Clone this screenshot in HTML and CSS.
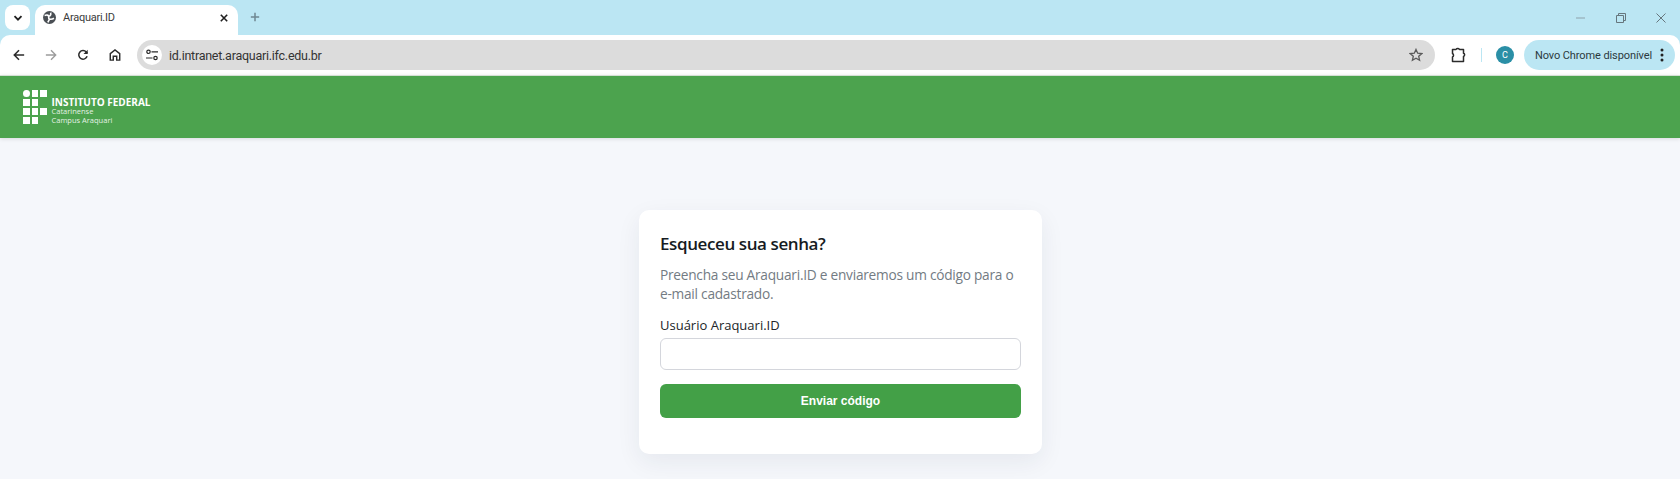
FILE: index.html
```html
<!DOCTYPE html>
<html lang="pt-BR">
<head>
<meta charset="utf-8">
<title>Araquari.ID</title>
<link rel="stylesheet" href="styles.css">
</head>
<body>
<div class="browser">
  <div class="tabstrip">
    <button class="tab-search" aria-label="Pesquisar guias">
      <svg width="12" height="12" viewBox="0 0 12 12"><path d="M2.5 4.2 6 7.7l3.5-3.5" fill="none" stroke="#1f1f1f" stroke-width="1.8"/></svg>
    </button>
    <div class="tab">
      <svg class="tab-globe" width="13" height="13" viewBox="0 0 16 16"><circle cx="8" cy="8" r="8" fill="#4a4f54"/><path d="M2 5.500c2.500-1 4.500-.5 5 1s-1 3 1 3.500 3 .5 5.500-1M6 14c.5-1.500 1-2 2-4M9.500 2c.5 1.500 0 3-1.500 4.500" fill="none" stroke="#fff" stroke-width="2"/></svg>
      <span class="tab-title">Araquari.ID</span>
      <svg class="tab-close" width="8" height="8" viewBox="0 0 10 10"><path d="M1 1l8 8M9 1 1 9" stroke="#1f1f1f" stroke-width="2" fill="none"/></svg>
    </div>
    <svg class="new-tab" width="10" height="10" viewBox="0 0 12 12"><path d="M6 1v10M1 6h10" stroke="#6f8791" stroke-width="1.800" fill="none"/></svg>
    <div class="window-controls">
      <svg width="10" height="10" viewBox="0 0 10 10"><path d="M0 5h9" stroke="#8ea2ab" stroke-width="1"/></svg>
      <svg width="10" height="10" viewBox="0 0 10 10"><path d="M.5 2.500h7v7h-7zM2.500 2.500v-2h7v7h-2" fill="none" stroke="#66767d" stroke-width="1"/></svg>
      <svg width="10" height="10" viewBox="0 0 10 10"><path d="M.5.5l9 9M9.500.5l-9 9" fill="none" stroke="#66767d" stroke-width="1"/></svg>
    </div>
  </div>
  <div class="toolbar">
    <div class="nav-icons">
      <svg width="12" height="12" viewBox="0 0 14 14"><path d="M13 7H2M7 1.500 1.500 7 7 12.500" fill="none" stroke="#2b2b2b" stroke-width="1.800"/></svg>
      <svg width="12" height="12" viewBox="0 0 14 14"><path d="M1 7h11M7 1.500 12.500 7 7 12.500" fill="none" stroke="#9c9c9c" stroke-width="1.600"/></svg>
      <svg width="12" height="12" viewBox="0 0 14 14"><path d="M11.800 8.500A5 5 0 1 1 10.800 3.500L12 5" fill="none" stroke="#2b2b2b" stroke-width="1.800"/><path d="M12.500.8v4.900H7.600z" fill="#2b2b2b"/></svg>
      <svg width="12" height="12" viewBox="0 0 14 14"><path d="M1.500 13V5.500L7 1.200l5.500 4.300V13H9V8.500H5V13Z" fill="none" stroke="#2b2b2b" stroke-width="1.700"/></svg>
    </div>
    <div class="omnibox">
      <span class="site-info">
        <svg width="12" height="12" viewBox="0 0 12 12"><g fill="none" stroke="#2b2b2b" stroke-width="1.200"><circle cx="2.500" cy="2.800" r="1.700"/><path d="M5.500 2.800H12M0 9h6.500"/><circle cx="9.500" cy="9" r="1.700"/></g></svg>
      </span>
      <span class="url">id.intranet.araquari.ifc.edu.br</span>
      <svg class="star" width="14" height="14" viewBox="0 0 14 14"><path d="m7 1.400 1.700 3.800 4.100.4-3.100 2.700.9 4L7 10.200l-3.600 2.100.9-4-3.100-2.700 4.100-.4Z" fill="none" stroke="#5a5a5a" stroke-width="1.300"/></svg>
    </div>
    <svg class="ext" width="16" height="16" viewBox="0 0 16 16"><path d="M2.500 2.500H6a2 2 0 0 1 3.500 0h4v3.700a1.700 1.700 0 0 1 0 3.200v5H2.500V10a2 2 0 0 0 0-3.500Z" fill="none" stroke="#2b2b2b" stroke-width="1.500" stroke-linejoin="round"/></svg>
    <span class="divider"></span>
    <span class="avatar">C</span>
    <div class="update-pill">
      <span>Novo Chrome disponível</span>
      <svg width="4" height="14" viewBox="0 0 4 14"><circle cx="2" cy="2" r="1.500" fill="#222"/><circle cx="2" cy="7" r="1.500" fill="#222"/><circle cx="2" cy="12" r="1.500" fill="#222"/></svg>
    </div>
  </div>
</div>
<header class="site-header">
  <div class="logo">
    <div class="logo-grid">
      <i class="dot"></i><i></i><i></i>
      <i></i><i></i><b></b>
      <i></i><i></i><i></i>
      <i></i><i></i><b></b>
    </div>
    <div class="logo-text">
      <strong>INSTITUTO FEDERAL</strong>
      <span>Catarinense</span>
      <span>Campus Araquari</span>
    </div>
  </div>
</header>
<main class="page">
  <form class="card">
    <h1>Esqueceu sua senha?</h1>
    <p>Preencha seu Araquari.ID e enviaremos um código para o e-mail cadastrado.</p>
    <label for="user">Usuário Araquari.ID</label>
    <input id="user" type="text">
    <button type="button" class="submit">Enviar código</button>
  </form>
</main>
</body>
</html>
```
FILE: styles.css
```css
* { box-sizing: border-box; }
html, body { margin: 0; height: 100%; overflow: hidden; }
body {
  background: #f5f7fb;
  font-family: "Open Sans", "Noto Sans", sans-serif;
  display: flex;
  flex-direction: column;
}
.browser { background: #bbe6f3; flex: none; font-family: "Roboto", "Open Sans", sans-serif; }
.tabstrip {
  height: 35px;
  display: flex;
  align-items: flex-end;
  padding-left: 5px;
}
.tab-search {
  width: 25px; height: 25px;
  margin-bottom: 5px;
  background: #fff;
  border: 0; border-radius: 8px;
  padding: 0;
  display: flex; align-items: center; justify-content: center;
}
.tab {
  width: 203px; height: 30px;
  margin-left: 5px;
  background: #fff;
  border-radius: 10px 10px 0 0;
  display: flex; align-items: center;
  padding: 0 10px 5px 8px;
}
.tab-globe { flex: none; }
.tab-title { font-size: 11px; letter-spacing: -.25px; color: #3a3a3a; margin-left: 7px; flex: 1; }
.new-tab { margin: 0 0 13px 12px; }
.window-controls {
  margin-left: auto;
  display: flex; gap: 30px;
  align-self: flex-start;
  padding: 13px 14px 0 0;
}
.toolbar {
  height: 40px;
  background: #fff;
  border-radius: 10px 10px 0 0;
  display: flex; align-items: center;
  padding: 0 4px 0 0;
}
.nav-icons {
  display: flex; gap: 20px;
  padding-left: 13px;
  width: 137px;
}
.omnibox {
  width: 1298px; height: 30px;
  background: #dcdcdc;
  border-radius: 15px;
  display: flex; align-items: center;
  padding: 0 12px 0 5px;
}
.site-info {
  width: 20px; height: 20px;
  background: #fff; border-radius: 50%;
  display: flex; align-items: center; justify-content: center;
}
.url { font-size: 12.500px; letter-spacing: -.25px; color: #333; margin-left: 7px; flex: 1; }
.star { flex: none; }
.ext { margin-left: 15px; flex: none; }
.divider { width: 1px; height: 14px; background: #bbe6f3; margin-left: 15px; }
.avatar {
  width: 18px; height: 18px; border-radius: 50%;
  background: #2a8fa6; color: #fff;
  font-size: 9px; line-height: 18px; text-align: center;
  margin-left: 14px;
}
.update-pill {
  width: 151px; height: 30px;
  background: #bbe6f3;
  border-radius: 15px;
  margin-left: 10px;
  display: flex; align-items: center; justify-content: space-between;
  padding: 0 11px 0 11px;
  font-size: 11px; letter-spacing: -.1px; color: #2b3a40;
  white-space: nowrap;
}
.site-header {
  height: 63px;
  flex: none;
  background: #4ca34e;
  border-top: 1px solid #d4e0d4;
  box-shadow: 0 1px 4px rgba(0,0,0,.12);
  display: flex; align-items: center;
  padding: 0 0 0 23px;
}
.logo { display: flex; align-items: flex-start; gap: 5px; color: #fff; }
.logo-grid {
  display: grid;
  grid-template-columns: repeat(3, 6.500px);
  grid-auto-rows: 7px;
  gap: 2px;
}
.logo-grid i { background: #fff; display: block; }
.logo-grid i.dot { border-radius: 50%; }
.logo-text { display: flex; flex-direction: column; margin-top: 7px; }
.logo-text strong { font-size: 10px; line-height: 10px; font-weight: 700; white-space: nowrap; }
.logo-text span { font-size: 7.500px; line-height: 9px; opacity: .85; white-space: nowrap; }
.page { flex: 1; display: flex; justify-content: center; align-items: flex-start; padding: 72px 0 0 1px; }
.card {
  width: 403px; height: 244px;
  background: #fff;
  border-radius: 10px;
  padding: 22px 21px;
  box-shadow: 0 8px 24px rgba(30,40,70,.07);
  display: flex; flex-direction: column;
}
.card h1 { margin: 0; font-size: 17px; letter-spacing: -.4px; line-height: 24px; font-weight: 600; color: #161b22; }
.card p { margin: 9px 0 0; font-size: 13.700px; letter-spacing: -.25px; line-height: 19px; color: #737b83; }
.card label { margin-top: 14px; font-size: 13px; line-height: 17px; color: #212529; }
.card input {
  margin-top: 4px; height: 32px;
  border: 1px solid #d4d6dc; border-radius: 6px;
  background: #fff;
}
.submit {
  margin-top: 14px; height: 34px;
  background: #43a047; color: #fff;
  border: 0; border-radius: 6px;
  font: 700 12px "Liberation Sans", Arial, sans-serif;
}
```
